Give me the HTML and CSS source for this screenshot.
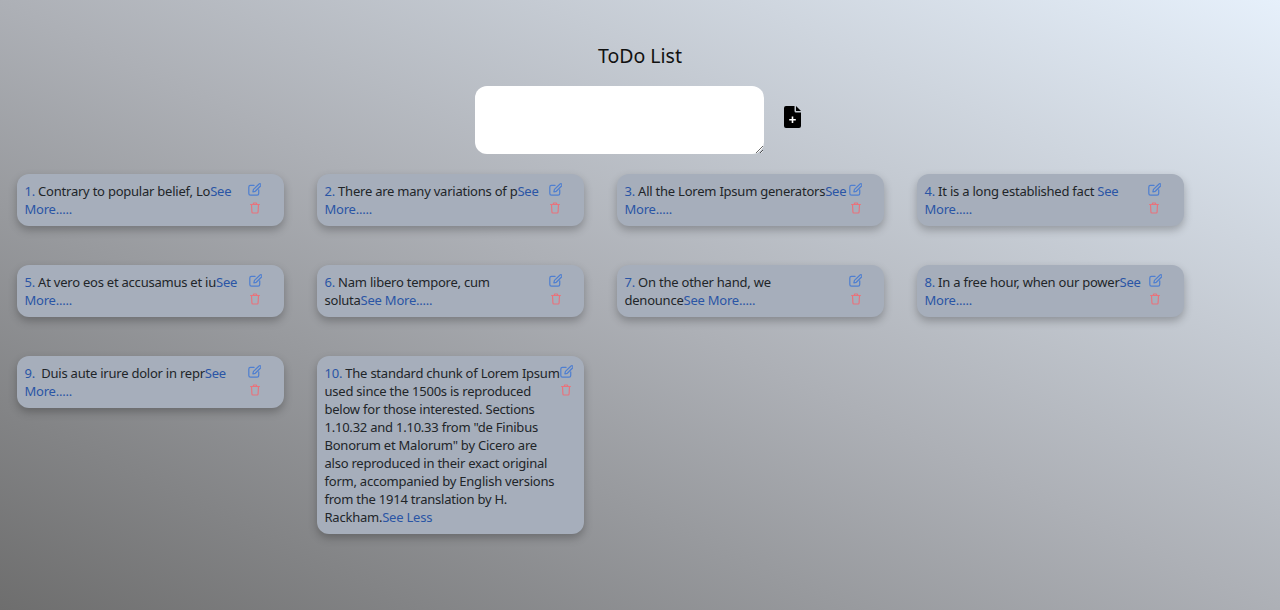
FILE: index.html
```html
<!DOCTYPE html>
<html lang="en">
<head>
    <meta charset="UTF-8">
    <title>ToDo List</title>
    <link rel="stylesheet" href="styles.css">
</head>
<body>
    <svg class="defs" width="0" height="0">
        <symbol id="edit" viewBox="0 0 16 16">
            <path d="M13.6 1.300a1.300 1.300 0 0 1 1.900 0l.2.2a1.300 1.300 0 0 1 0 1.900L9 10.200l-3 .8.700-3.100z" fill="none" stroke="currentColor" stroke-width="1.500" stroke-linejoin="round"/>
            <path d="M7.500 2.800H3a2 2 0 0 0-2 2V13a2 2 0 0 0 2 2h8.200a2 2 0 0 0 2-2V8.500" fill="none" stroke="currentColor" stroke-width="1.500" stroke-linecap="round"/>
        </symbol>
        <symbol id="trash" viewBox="0 0 12 14">
            <path d="M.7 2.800h10.600M3.800 2.800l.6-1.800h3.200l.6 1.800M1.800 2.800l.5 9a1.200 1.200 0 0 0 1.200 1.200h5a1.200 1.200 0 0 0 1.200-1.200l.5-9" fill="none" stroke="currentColor" stroke-width="1.400" stroke-linejoin="round" stroke-linecap="round"/>
        </symbol>
    </svg>

    <h1>ToDo List</h1>
    <form class="add-form">
        <textarea class="todo-input"></textarea>
        <button type="button" class="add-btn" aria-label="Add">
            <svg width="17" height="22" viewBox="0 0 17 22">
                <path d="M2 0h8.500v5a1.500 1.500 0 0 0 1.500 1.500h5V20a2 2 0 0 1-2 2H2a2 2 0 0 1-2-2V2a2 2 0 0 1 2-2z" fill="#000"/>
                <path d="M12 0l5 5h-5z" fill="#000"/>
                <path d="M8.500 10.500v6.500M5.200 13.700h6.600" stroke="#fff" stroke-width="1.600" fill="none"/>
            </svg>
        </button>
    </form>

    <div class="todo-grid">
        <div class="todo-col">
            <div class="todo-card">
                <p class="todo-text"><span class="num">1.</span> Contrary to popular belief, Lo<a class="toggle">See More.....</a></p>
                <div class="actions"><svg class="edit"><use href="#edit"/></svg><svg class="trash"><use href="#trash"/></svg></div>
            </div>
        </div>
        <div class="todo-col">
            <div class="todo-card">
                <p class="todo-text"><span class="num">2.</span> There are many variations of p<a class="toggle">See More.....</a></p>
                <div class="actions"><svg class="edit"><use href="#edit"/></svg><svg class="trash"><use href="#trash"/></svg></div>
            </div>
        </div>
        <div class="todo-col">
            <div class="todo-card">
                <p class="todo-text"><span class="num">3.</span> All the Lorem Ipsum generators<a class="toggle">See More.....</a></p>
                <div class="actions"><svg class="edit"><use href="#edit"/></svg><svg class="trash"><use href="#trash"/></svg></div>
            </div>
        </div>
        <div class="todo-col">
            <div class="todo-card">
                <p class="todo-text"><span class="num">4.</span> It is a long established fact <a class="toggle">See More.....</a></p>
                <div class="actions"><svg class="edit"><use href="#edit"/></svg><svg class="trash"><use href="#trash"/></svg></div>
            </div>
        </div>
        <div class="todo-col">
            <div class="todo-card">
                <p class="todo-text"><span class="num">5.</span> At vero eos et accusamus et iu<a class="toggle">See More.....</a></p>
                <div class="actions"><svg class="edit"><use href="#edit"/></svg><svg class="trash"><use href="#trash"/></svg></div>
            </div>
        </div>
        <div class="todo-col">
            <div class="todo-card">
                <p class="todo-text"><span class="num">6.</span> Nam libero tempore, cum soluta<a class="toggle">See More.....</a></p>
                <div class="actions"><svg class="edit"><use href="#edit"/></svg><svg class="trash"><use href="#trash"/></svg></div>
            </div>
        </div>
        <div class="todo-col">
            <div class="todo-card">
                <p class="todo-text"><span class="num">7.</span> On the other hand, we denounce<a class="toggle">See More.....</a></p>
                <div class="actions"><svg class="edit"><use href="#edit"/></svg><svg class="trash"><use href="#trash"/></svg></div>
            </div>
        </div>
        <div class="todo-col">
            <div class="todo-card">
                <p class="todo-text"><span class="num">8.</span> In a free hour, when our power<a class="toggle">See More.....</a></p>
                <div class="actions"><svg class="edit"><use href="#edit"/></svg><svg class="trash"><use href="#trash"/></svg></div>
            </div>
        </div>
        <div class="todo-col">
            <div class="todo-card">
                <p class="todo-text"><span class="num">9.</span> &nbsp;Duis aute irure dolor in repr<a class="toggle">See More.....</a></p>
                <div class="actions"><svg class="edit"><use href="#edit"/></svg><svg class="trash"><use href="#trash"/></svg></div>
            </div>
        </div>
        <div class="todo-col">
            <div class="todo-card">
                <p class="todo-text"><span class="num">10.</span> The standard chunk of Lorem Ipsum used since the 1500s is reproduced below for those interested. Sections 1.10.32 and 1.10.33 from "de Finibus Bonorum et Malorum" by Cicero are also reproduced in their exact original form, accompanied by English versions from the 1914 translation by H. Rackham.<a class="toggle">See Less</a></p>
                <div class="actions"><svg class="edit"><use href="#edit"/></svg><svg class="trash"><use href="#trash"/></svg></div>
            </div>
        </div>
    </div>
</body>
</html>
```

FILE: styles.css
```css
* {
    margin: 0;
    padding: 0;
    box-sizing: border-box;
}

body {
    font-family: 'Noto Sans', 'Open Sans', sans-serif;
    background: linear-gradient(to top right, #6e6e6e 0%, #adb0b6 50%, #e6f0fb 100%);
    min-height: 610px;
    overflow: hidden;
    color: #212529;
}

.defs {
    position: absolute;
}

h1 {
    font-size: 19.500px;
    font-weight: 400;
    line-height: 28px;
    text-align: center;
    padding-top: 42px;
    color: #111;
}

.add-form {
    display: flex;
    justify-content: center;
    align-items: center;
    gap: 20px;
    margin-top: 16px;
    padding-right: 4px;
}

.todo-input {
    display: block;
    width: 289px;
    height: 68px;
    border: none;
    border-radius: 12px;
    background: white;
    outline: none;
}

.add-btn {
    background: none;
    border: none;
    display: flex;
    margin-bottom: 6px;
}

.todo-grid {
    display: flex;
    flex-wrap: wrap;
    align-items: flex-start;
    width: 1200px;
    margin-top: 20px;
}

.todo-col {
    width: 300px;
    padding: 0 16.500px;
    margin-bottom: 39px;
}

.todo-card {
    display: flex;
    width: 267px;
    padding: 8px;
    border-radius: 12px;
    background: #a6aebb;
    box-shadow: 0 4px 8px rgba(0, 0, 0, 0.25);
    font-size: 13px;
    letter-spacing: -0.23px;
    line-height: 18px;
}

.todo-text {
    flex: 1 1 auto;
    min-width: 0;
}

.num, .toggle {
    color: #2a55a5;
}

/* shrinks with the text, so the icons sit further right on long todos */
.actions {
    display: flex;
    flex-direction: column;
    align-items: flex-start;
    gap: 6px;
    flex: 0 1 15px;
    min-width: 0;
    margin: 1px 12px 0 2px;
}

.edit {
    flex-shrink: 0;
    width: 13px;
    height: 13px;
    margin-left: -2px;
    color: #4f7fd0;
}

.trash {
    flex-shrink: 0;
    width: 10px;
    height: 12px;
    margin-left: -0.500px;
    color: #e8737c;
}
```
